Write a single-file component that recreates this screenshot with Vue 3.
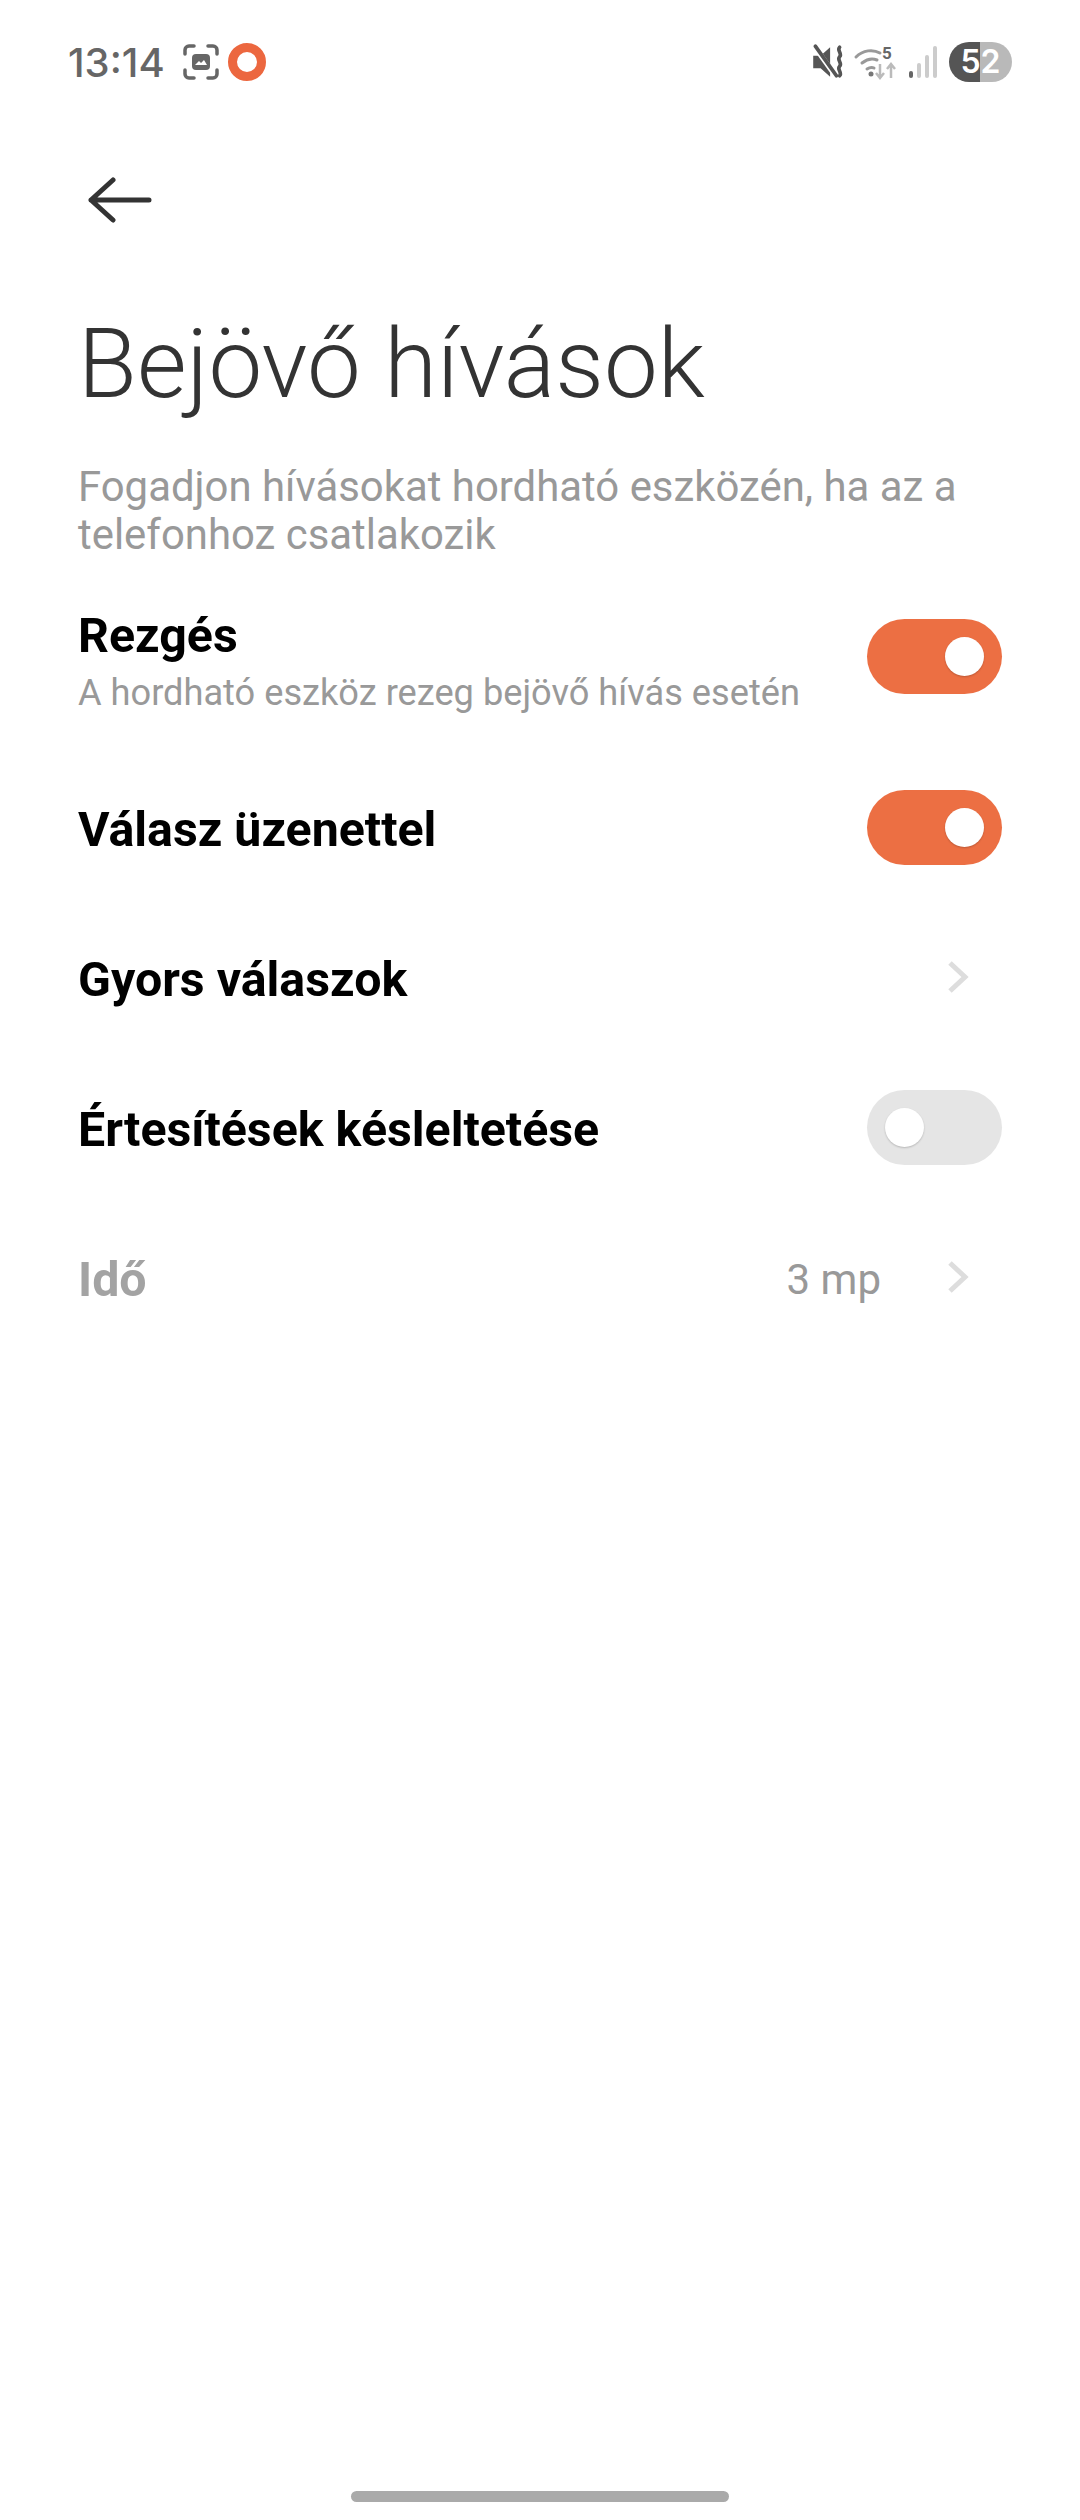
<template>
  <div class="page">
    <div class="status-bar">
      <div class="status-left">
        <span class="time">13:14</span>
        <svg class="shot-icon" width="36" height="36" viewBox="0 0 36 36">
          <path d="M2 10V6a4 4 0 0 1 4-4h5M25 2h5a4 4 0 0 1 4 4v4M34 26v4a4 4 0 0 1-4 4h-5M11 34H6a4 4 0 0 1-4-4v-4" fill="none" stroke="#666" stroke-width="3.5" stroke-linecap="round" />
          <rect x="9" y="10" width="18" height="16" rx="4" fill="#666" />
          <path d="M12 21l4-4 2 2 3-3 3 5z" fill="#fff" />
        </svg>
        <span class="rec-dot"></span>
      </div>
      <div class="status-right">
        <svg width="32" height="38" viewBox="0 0 30 36">
          <path d="M1 12h7l9-8v28l-9-8H1z" fill="#555" />
          <path d="M2 3l20 28" stroke="#fff" stroke-width="5" />
          <path d="M3 3l20 28" stroke="#555" stroke-width="3.5" stroke-linecap="round" />
          <path d="M26 4c-3 3 3 6 0 9s3 6 0 9 3 6 0 9" fill="none" stroke="#555" stroke-width="3.5" stroke-linecap="round" />
        </svg>
        <svg class="wifi-icon" width="42" height="36" viewBox="0 0 42 36">
          <g fill="none" stroke="#999" stroke-width="3" stroke-linecap="round">
            <path d="M1 13c7-7 17-8 24-4" />
            <path d="M7 19c5-4 10-5 15-3" />
            <path d="M12 25c3-2 5-2 7-1" />
          </g>
          <circle cx="16" cy="30" r="2.5" fill="#777" />
          <text x="27" y="15" class="wifi-five">5</text>
          <path d="M25 20v14M21 29l4 5 4-5" fill="none" stroke="#bbb" stroke-width="2.5" />
          <path d="M36 34V20M32 25l4-5 4 5" fill="none" stroke="#bbb" stroke-width="2.5" />
        </svg>
        <svg width="30" height="36" viewBox="0 0 30 36">
          <rect x="1" y="27" width="4" height="7" rx="2" fill="#666" />
          <rect x="9" y="19" width="4" height="15" rx="2" fill="#ccc" />
          <rect x="17" y="11" width="4" height="23" rx="2" fill="#ccc" />
          <rect x="25" y="2" width="4" height="32" rx="2" fill="#ccc" />
        </svg>
        <div class="battery">52</div>
      </div>
    </div>

    <div class="back-row">
      <svg width="64" height="46" viewBox="0 0 64 46">
        <path d="M25 3L3 23l22 20M3 23h58" fill="none" stroke="#333" stroke-width="5" stroke-linecap="round" stroke-linejoin="round" />
      </svg>
    </div>

    <h1 class="title">Bejövő hívások</h1>
    <p class="desc">Fogadjon hívásokat hordható eszközén, ha az a telefonhoz csatlakozik</p>

    <div class="row row-tall">
      <div class="row-text">
        <div class="row-title">Rezgés</div>
        <div class="row-sub">A hordható eszköz rezeg bejövő hívás esetén</div>
      </div>
      <div class="toggle on"><span class="thumb"></span></div>
    </div>

    <div class="row">
      <div class="row-title">Válasz üzenettel</div>
      <div class="toggle on"><span class="thumb"></span></div>
    </div>

    <div class="row">
      <div class="row-title">Gyors válaszok</div>
      <svg class="chevron" width="22" height="34" viewBox="0 0 22 34">
        <path d="M3 3l15 14L3 31" fill="none" stroke="#ddd" stroke-width="5" />
      </svg>
    </div>

    <div class="row">
      <div class="row-title">Értesítések késleltetése</div>
      <div class="toggle"><span class="thumb"></span></div>
    </div>

    <div class="row">
      <div class="row-title disabled">Idő</div>
      <div class="row-value">3 mp</div>
      <svg class="chevron" width="22" height="34" viewBox="0 0 22 34">
        <path d="M3 3l15 14L3 31" fill="none" stroke="#ddd" stroke-width="5" />
      </svg>
    </div>

    <div class="home-bar"></div>
  </div>
</template>

<script setup>
</script>

<style>
html, body {
  margin: 0;
  background: #fff;
}
</style>

<style scoped>
.page {
  width: 1080px;
  height: 2520px;
  box-sizing: border-box;
  display: flex;
  flex-direction: column;
  background: #fff;
  font-family: Roboto, "Liberation Sans", sans-serif;
}

.status-bar {
  height: 124px;
  box-sizing: border-box;
  padding: 0 68px;
  display: flex;
  justify-content: space-between;
  align-items: center;
}

.status-left,
.status-right {
  display: flex;
  align-items: center;
}

.time {
  font-family: Inter, Roboto, sans-serif;
  font-size: 40px;
  font-weight: 500;
  color: #666;
  margin-right: 18px;
}

.rec-dot {
  width: 38px;
  height: 38px;
  box-sizing: border-box;
  border: 9px solid #ec673f;
  border-radius: 50%;
  margin-left: 9px;
}

.status-right {
  gap: 11px;
}

.wifi-icon {
  overflow: visible;
}

.wifi-five {
  font-family: Roboto, sans-serif;
  font-size: 17px;
  font-weight: 700;
  fill: #666;
}

.battery {
  width: 63px;
  height: 40px;
  border-radius: 20px;
  background: linear-gradient(90deg, #555 0 50%, #b9b9b9 50% 100%);
  color: #fff;
  font-family: Inter, Roboto, sans-serif;
  font-size: 32px;
  font-weight: 600;
  line-height: 40px;
  text-align: center;
}

.back-row {
  height: 76px;
  margin-top: 38px;
  padding-left: 88px;
  display: flex;
  align-items: center;
}

.title {
  margin: 71px 0 0 78px;
  font-size: 96px;
  font-weight: 300;
  line-height: 110px;
  color: #333;
}

.desc {
  margin: 44px 78px 0;
  font-size: 41.9px;
  line-height: 48px;
  color: #999;
}

.row {
  height: 150px;
  padding: 0 78px;
  display: flex;
  align-items: center;
}

.row-tall {
  height: 191px;
  margin-top: 2px;
}

.row-text {
  display: flex;
  flex-direction: column;
  margin-top: 10px;
}

.row-title {
  font-size: 48.3px;
  font-weight: 700;
  line-height: 56px;
  color: #000;
}

.row > .row-title {
  padding-top: 6px;
}

.row-title.disabled {
  color: #a3a3a3;
}

.row-sub {
  font-size: 36.2px;
  line-height: 44px;
  color: #999;
  margin-top: 7px;
}

.row-value {
  margin-left: auto;
  margin-right: 66px;
  padding-top: 4px;
  font-size: 42px;
  color: #999;
}

.toggle {
  width: 135px;
  height: 75px;
  border-radius: 38px;
  margin-left: auto;
  background: #e5e5e5;
  display: flex;
  align-items: center;
  padding: 0 18px;
  box-sizing: border-box;
}

.toggle.on {
  background: #ec6f43;
  justify-content: flex-end;
}

.thumb {
  width: 39px;
  height: 39px;
  border-radius: 50%;
  background: #fff;
  box-shadow: 0 1px 2px rgba(0, 0, 0, 0.2);
}

.chevron {
  margin-left: auto;
  margin-right: 33px;
}

.row-value + .chevron {
  margin-left: 0;
}

.home-bar {
  width: 378px;
  height: 11px;
  border-radius: 6px;
  background: #aaa;
  margin: auto auto 18px;
}
</style>
